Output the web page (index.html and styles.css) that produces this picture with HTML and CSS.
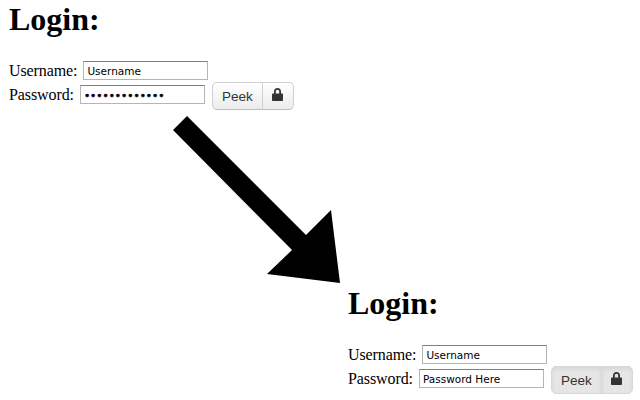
FILE: index.html
```html
<!DOCTYPE html>
<html lang="en">
<head>
  <meta charset="UTF-8">
  <title>Login</title>
  <link rel="stylesheet" href="styles.css">
</head>
<body>
  <form class="login">
    <h1>Login:</h1>
    <div class="row">
      <label for="user1">Username:</label>
      <input id="user1" type="text" value="Username">
    </div>
    <div class="row row-pass">
      <label for="pass1">Password:</label>
      <input id="pass1" class="dots" type="password" value="Password Here">
      <div class="btn-group">
        <button type="button" class="btn">Peek</button>
        <button type="button" class="btn btn-icon">
          <svg class="lock" viewBox="0 0 11 13"><path d="M2 5.500V3.500C2 1.300 3.400 0 5.500 0S9 1.300 9 3.500v2h1c.6 0 1 .4 1 1V12c0 .6-.4 1-1 1H1c-.6 0-1-.4-1-1V6.500c0-.6.4-1 1-1h1zm1.800 0h3.400V3.600c0-1.100-.6-1.800-1.700-1.800s-1.700.7-1.700 1.800v1.900z" fill-rule="evenodd"/></svg>
        </button>
      </div>
    </div>
  </form>

  <svg class="arrow" viewBox="0 0 168 168">
    <polygon points="14,0 0,14 119,134 94,158 167,167 158,94 133,119"/>
  </svg>

  <form class="login login-peek">
    <h1>Login:</h1>
    <div class="row">
      <label for="user2">Username:</label>
      <input id="user2" type="text" value="Username">
    </div>
    <div class="row row-pass">
      <label for="pass2">Password:</label>
      <input id="pass2" type="text" value="Password Here">
      <div class="btn-group">
        <button type="button" class="btn">Peek</button>
        <button type="button" class="btn btn-icon">
          <svg class="lock" viewBox="0 0 11 13"><path d="M2 5.500V3.500C2 1.300 3.400 0 5.500 0S9 1.300 9 3.500v2h1c.6 0 1 .4 1 1V12c0 .6-.4 1-1 1H1c-.6 0-1-.4-1-1V6.500c0-.6.4-1 1-1h1zm1.800 0h3.400V3.600c0-1.100-.6-1.800-1.700-1.800s-1.700.7-1.700 1.800v1.900z" fill-rule="evenodd"/></svg>
        </button>
      </div>
    </div>
  </form>
</body>
</html>
```

FILE: styles.css
```css
body {
  margin: 0;
  background-color: #fff;
  color: #000;
  font-family: "Liberation Serif", serif;
  font-size: 16px;
}
.login {
  padding: 0 0 6px 9px;
}
.login-peek {
  margin-left: 339px;
}
h1 {
  margin: 0;
  padding-top: 1px;
  height: 61px;
  box-sizing: border-box;
  font-size: 32px;
  line-height: 37px;
  font-weight: bold;
}
.row {
  display: flex;
  align-items: center;
  height: 19px;
}
.row label {
  margin-right: 6px;
  letter-spacing: -0.1px;
}
.row-pass {
  margin-top: 5px;
}
.row input {
  box-sizing: border-box;
  width: 125px;
  height: 19px;
  margin: 0;
  padding: 1px 3px;
  border: 1px solid #b5b5b5;
  border-top-color: #7f7f7f;
  border-radius: 0;
  outline: none;
  font-family: "DejaVu Sans", sans-serif;
  font-size: 10.500px;
  color: #000;
}
.row input.dots {
  -webkit-text-stroke: 0.5px #000;
}
.btn-group {
  display: flex;
  flex: none;
  margin-left: 7px;
  margin-top: 3px;
  height: 28px;
}
.btn {
  box-sizing: border-box;
  width: 51px;
  height: 28px;
  margin: 0;
  padding: 0;
  border: 1px solid #d0d0d0;
  border-bottom-color: #bbb;
  background: linear-gradient(#fff, #ececec);
  border-radius: 5px 0 0 5px;
  font-family: "Liberation Sans", sans-serif;
  font-size: 13.500px;
  color: #333;
}
.btn-icon {
  width: 32px;
  margin-left: -1px;
  border-radius: 0 5px 5px 0;
}
.lock {
  display: block;
  width: 11px;
  height: 13px;
  margin: -3px auto 0;
  fill: #333;
}
.login-peek .btn {
  background: #e6e6e6;
  box-shadow: inset 0 2px 4px rgba(0, 0, 0, 0.08);
  border-color: #d8d8d8;
}
.arrow {
  display: block;
  width: 168px;
  height: 168px;
  margin: 6px 0 0 173px;
  fill: #000;
}
```
